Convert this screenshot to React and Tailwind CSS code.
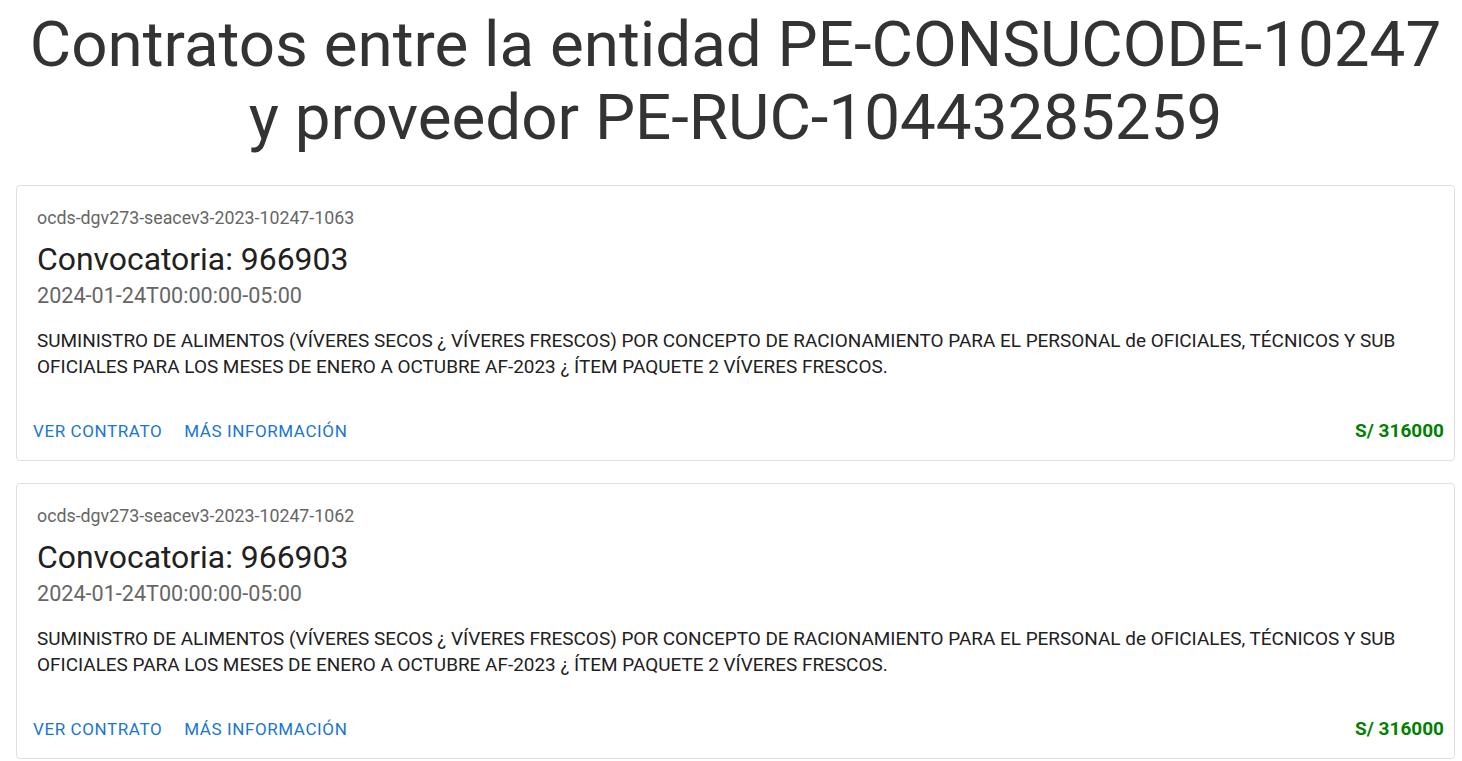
import React from 'react';

const contracts = [
  {
    ocid: 'ocds-dgv273-seacev3-2023-10247-1063',
    title: 'Convocatoria: 966903',
    date: '2024-01-24T00:00:00-05:00',
    description:
      'SUMINISTRO DE ALIMENTOS (VÍVERES SECOS ¿ VÍVERES FRESCOS) POR CONCEPTO DE RACIONAMIENTO PARA EL PERSONAL de OFICIALES, TÉCNICOS Y SUB OFICIALES PARA LOS MESES DE ENERO A OCTUBRE AF-2023 ¿ ÍTEM PAQUETE 2 VÍVERES FRESCOS.',
    amount: 'S/ 316000',
  },
  {
    ocid: 'ocds-dgv273-seacev3-2023-10247-1062',
    title: 'Convocatoria: 966903',
    date: '2024-01-24T00:00:00-05:00',
    description:
      'SUMINISTRO DE ALIMENTOS (VÍVERES SECOS ¿ VÍVERES FRESCOS) POR CONCEPTO DE RACIONAMIENTO PARA EL PERSONAL de OFICIALES, TÉCNICOS Y SUB OFICIALES PARA LOS MESES DE ENERO A OCTUBRE AF-2023 ¿ ÍTEM PAQUETE 2 VÍVERES FRESCOS.',
    amount: 'S/ 316000',
  },
];

function ContractCard({ c }) {
  return (
    <div className="bg-white border border-[#e0e0e0] rounded-[4px] mb-[22px]">
      {/* Content */}
      <div className="px-5 pt-5">
        <p className="text-[17.8px] leading-[24px] text-[#666]">{c.ocid}</p>
        <h2 className="mt-[9px] text-[31.9px] leading-[40px] text-[#212121]">{c.title}</h2>
        <p className="mt-px text-[21.6px] leading-[32px] text-[#666]">{c.date}</p>
        <p className="mt-4 text-[18.95px] leading-[26px] text-[#212121]">{c.description}</p>
      </div>

      {/* Actions */}
      <div className="flex items-center px-2 pt-[33px] pb-[11px]">
        <button className="px-2 py-[6px] text-[17px] leading-[24px] font-normal tracking-[0.035em] text-[#1976d2] uppercase rounded-[4px]">
          Ver contrato
        </button>
        <button className="ml-[6px] px-2 py-[6px] text-[17px] leading-[24px] font-normal tracking-[0.035em] text-[#1976d2] uppercase rounded-[4px]">
          Más información
        </button>
        <span className="ml-auto pr-[2px] text-[19px] leading-[24px] font-bold text-[#008000]">{c.amount}</span>
      </div>
    </div>
  );
}

export default function App() {
  return (
    <div className="min-h-screen bg-white font-['Roboto','Liberation_Sans',sans-serif]">
      <div className="ml-4 mr-[7px]">
        <h1 className="pt-2 text-center text-[63.7px] leading-[73px] text-[#333]">
          Contratos entre la entidad PE-CONSUCODE-10247 y proveedor PE-RUC-10443285259
        </h1>
        <div className="mt-[31px]">
          {contracts.map((c) => (
            <ContractCard key={c.ocid} c={c} />
          ))}
        </div>
      </div>
    </div>
  );
}
